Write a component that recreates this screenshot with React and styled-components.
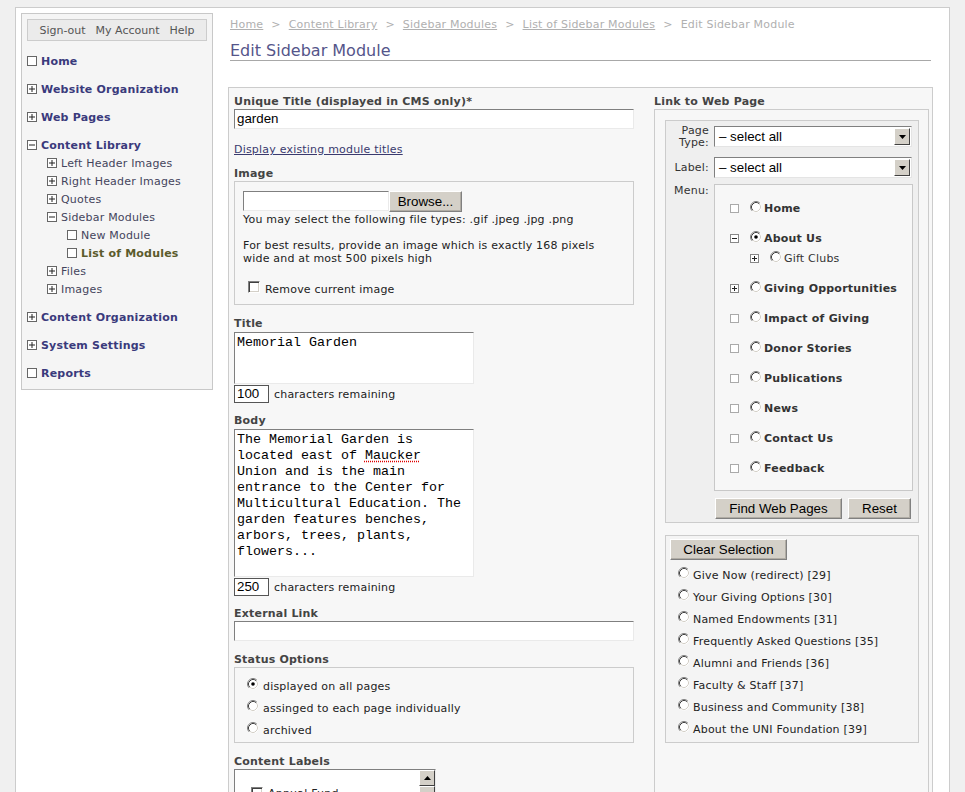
import styled, { createGlobalStyle } from "styled-components";

const GlobalStyle = createGlobalStyle`
  body {
    margin: 0;
    background: #f0f0f0;
    font-family: "DejaVu Sans", Verdana, sans-serif;
    font-size: 11px;
    letter-spacing: 0.2px;
    color: #333;
  }
  * { box-sizing: border-box; }
`;

const navItems = [
  { label: "Home", level: 0 },
  { label: "Website Organization", level: 0, sign: "+" },
  { label: "Web Pages", level: 0, sign: "+" },
  { label: "Content Library", level: 0, sign: "-" },
  { label: "Left Header Images", level: 1, sign: "+" },
  { label: "Right Header Images", level: 1, sign: "+" },
  { label: "Quotes", level: 1, sign: "+" },
  { label: "Sidebar Modules", level: 1, sign: "-" },
  { label: "New Module", level: 2 },
  { label: "List of Modules", level: 2, active: true },
  { label: "Files", level: 1, sign: "+" },
  { label: "Images", level: 1, sign: "+" },
  { label: "Content Organization", level: 0, sign: "+" },
  { label: "System Settings", level: 0, sign: "+" },
  { label: "Reports", level: 0 },
];

const menuItems = [
  { label: "Home" },
  { label: "About Us", sign: "-", checked: true },
  { label: "Gift Clubs", sign: "+", child: true },
  { label: "Giving Opportunities", sign: "+" },
  { label: "Impact of Giving" },
  { label: "Donor Stories" },
  { label: "Publications" },
  { label: "News" },
  { label: "Contact Us" },
  { label: "Feedback" },
];

const results = [
  "Give Now (redirect) [29]",
  "Your Giving Options [30]",
  "Named Endowments [31]",
  "Frequently Asked Questions [35]",
  "Alumni and Friends [36]",
  "Faculty & Staff [37]",
  "Business and Community [38]",
  "About the UNI Foundation [39]",
];

const bodyLines = [
  "The Memorial Garden is",
  ["located east of ", "Maucker"],
  "Union and is the main",
  "entrance to the Center for",
  "Multicultural Education. The",
  "garden features benches,",
  "arbors, trees, plants,",
  "flowers...",
];

const TreeBox = ({ sign, size = 10, light }) => {
  const m = size / 2;
  return (
    <svg width={size} height={size} viewBox={`0 0 ${size} ${size}`}>
      <rect
        x="0.5"
        y="0.5"
        width={size - 1}
        height={size - 1}
        fill="#fff"
        stroke={light ? (sign ? "#888" : "#aaa") : "#666"}
      />
      {sign && <path d={`M2 ${m}h${size - 4}`} stroke="#222" />}
      {sign === "+" && <path d={`M${m} 2v${size - 4}`} stroke="#222" />}
    </svg>
  );
};

const Radio = ({ checked }) => (
  <svg width="12" height="12" viewBox="0 0 12 12">
    <circle cx="6" cy="6" r="5.5" fill="#fff" />
    <path d="M2.11 9.89A5.5 5.5 0 0 1 9.89 2.11" fill="none" stroke="#808080" />
    <path d="M2.82 9.18A4.5 4.5 0 0 1 9.18 2.82" fill="none" stroke="#404040" />
    <path d="M9.18 2.82A4.5 4.5 0 0 1 2.82 9.18" fill="none" stroke="#d4d0c8" />
    {checked && <circle cx="6" cy="6" r="1.8" fill="#000" />}
  </svg>
);

const Arrow = ({ up }) => (
  <svg width="7" height="4" viewBox="0 0 7 4">
    <path d={up ? "M3.5 0L7 4H0z" : "M0 0h7L3.5 4z"} fill="#000" />
  </svg>
);

const Page = styled.div`
  margin: 7px 15px 0;
  padding: 5px;
  background: #fff;
  border: 1px solid #ccc;
  border-bottom: none;
  display: flex;
  align-items: flex-start;
`;

const Sidebar = styled.nav`
  width: 192px;
  flex-shrink: 0;
  background: #f5f5f5;
  border: 1px solid #c8c8c8;
  padding: 5px 5px 7px;
`;

const AccountBar = styled.div`
  height: 22px;
  background: #ebebeb;
  border: 1px solid #ccc;
  display: flex;
  align-items: center;
  justify-content: center;
  gap: 10px;
  color: #555;
  letter-spacing: 0;
`;

const NavTree = styled.div`
  padding-top: 1px;
`;

const NavItem = styled.div`
  display: flex;
  align-items: center;
  gap: 4px;
  height: 18px;
  margin-top: ${(p) => (p.$level === 0 ? 10 : 0)}px;
  padding-left: ${(p) => p.$level * 20}px;
  font-weight: ${(p) => (p.$level === 0 || p.$active ? "bold" : "normal")};
  color: ${(p) =>
    p.$active ? "#5b5b2c" : p.$level === 0 ? "#3a3a7c" : "#44445c"};
`;

const Main = styled.main`
  flex: 1;
  padding: 0 11px 0 15px;
`;

const Breadcrumb = styled.div`
  margin: 4px 2px 0;
  line-height: 16px;
  height: 14px;
  color: #b0b0b0;

  a {
    color: inherit;
    text-decoration: underline;
  }
`;

const Sep = styled.span`
  margin: 0 8px;
`;

const Heading = styled.h1`
  margin: 9px 2px 0;
  font-size: 16px;
  font-weight: normal;
  letter-spacing: 0;
  line-height: 22px;
  height: 21px;
  color: #55558a;
  border-bottom: 1px solid #a8a8a8;
`;

const ContentBox = styled.div`
  margin-top: 26px;
  background: #f7f7f7;
  border: 1px solid #ccc;
  border-bottom: none;
  padding: 6px 3px 0 5px;
  display: flex;
  gap: 20px;
`;

const LeftCol = styled.div`
  width: 400px;
  flex-shrink: 0;
  padding-bottom: 20px;
`;

const RightCol = styled.div`
  width: 275px;
  display: flex;
  flex-direction: column;
`;

const FieldLabel = styled.div`
  margin-top: ${(p) => p.$mt || 0}px;
  font-weight: bold;
  height: 14px;
  line-height: 16px;
  color: #444;
`;

const TextInput = styled.div`
  margin-top: 1px;
  width: ${(p) => p.$w || 400}px;
  height: 20px;
  background: #fff;
  border: 1px solid;
  border-color: #7f7f7f #eaeaea #eaeaea #7f7f7f;
  padding: 0 2px;
  font-family: "Liberation Sans", Arial, sans-serif;
  font-size: 13.33px;
  letter-spacing: 0;
  line-height: 18px;
  color: #000;
`;

const TextLink = styled.a`
  display: block;
  margin-top: 13px;
  height: 14px;
  line-height: 16px;
  color: #3a3a6e;
  text-decoration: underline;
`;

const FieldBox = styled.div`
  margin-top: 1px;
  border: 1px solid #ccc;
  padding: ${(p) => p.$pad};
`;

const FileRow = styled.div`
  display: flex;
  height: 20px;
`;

const FileBox = styled.div`
  width: 146px;
  height: 20px;
  background: #fff;
  border: 1px solid;
  border-color: #7f7f7f #eaeaea #eaeaea #7f7f7f;
`;

const Button = styled.button`
  width: ${(p) => p.$w}px;
  height: 21px;
  padding: 0;
  margin: 0;
  background: #d4d0c8;
  border: 1px solid;
  border-color: #fff #808080 #808080 #fff;
  box-shadow: inset -1px -1px 0 #b0aca4;
  font-family: "Liberation Sans", Arial, sans-serif;
  font-size: 13.33px;
  letter-spacing: 0;
  color: #000;
`;

const HelpText = styled.p`
  margin: ${(p) => p.$mt}px 0 0;
  line-height: 13px;
  color: #222;
`;

const CheckRow = styled.div`
  display: flex;
  align-items: center;
  gap: 5px;
  height: 14px;
  margin-top: ${(p) => p.$mt || 0}px;
  padding-left: ${(p) => p.$pl || 0}px;
  color: #222;
`;

const CheckBox = styled.span`
  display: inline-block;
  width: 12px;
  height: 12px;
  margin-bottom: ${(p) => p.$lift || 0}px;
  background: #fff;
  border: 1px solid;
  border-color: #808080 #fff #fff #808080;
  box-shadow: inset 1px 1px 0 #404040, inset -1px -1px 0 #d4d0c8;
`;

const TextArea = styled.div`
  margin-top: 2px;
  width: 240px;
  height: ${(p) => p.$h}px;
  background: #fff;
  border: 1px solid;
  border-color: #7f7f7f #eaeaea #eaeaea #7f7f7f;
  padding: 2px 2px 0;
  font-family: "Liberation Mono", "Courier New", monospace;
  font-size: 13.33px;
  letter-spacing: 0;
  line-height: 16px;
  color: #000;
  white-space: pre;
`;

const Misspelled = styled.span`
  text-decoration: underline dotted #d00;
  text-underline-offset: 2px;
`;

const CountRow = styled.div`
  margin-top: 1px;
  display: flex;
  align-items: center;
  gap: 5px;
  height: 18px;
  line-height: 21px;
  color: #222;
`;

const CountBox = styled.div`
  width: 35px;
  height: 18px;
  background: #fff;
  border: 1px solid #555;
  padding: 0 2px;
  font-family: "Liberation Sans", Arial, sans-serif;
  font-size: 13.33px;
  letter-spacing: 0;
  line-height: 16px;
  color: #000;
`;

const RadioRow = styled.div`
  display: flex;
  align-items: center;
  gap: ${(p) => p.$gap || 4}px;
  height: 22px;
  padding-left: ${(p) => p.$pl || 0}px;
  color: #222;

  svg {
    margin-bottom: ${(p) => p.$lift || 0}px;
    flex-shrink: 0;
  }
`;

const ListBox = styled.div`
  margin-top: 1px;
  width: 202px;
  height: 110px;
  display: flex;
  background: #fff;
  border: 1px solid;
  border-color: #7f7f7f #eaeaea #eaeaea #7f7f7f;
`;

const ListInner = styled.div`
  flex: 1;
  padding: 16px 0 0 16px;
`;

const ScrollTrack = styled.div`
  width: 16px;
  background: #ecebe6;
  display: flex;
  flex-direction: column;
`;

const ScrollButton = styled.div`
  height: ${(p) => p.$h || 16}px;
  background: #d4d0c8;
  border: 1px solid;
  border-color: #fff #404040 #404040 #fff;
  display: flex;
  align-items: center;
  justify-content: center;
`;

const LinkBox = styled.div`
  flex: 1;
  margin-top: 1px;
  border: 1px solid #ccc;
  border-bottom: none;
  padding: 10px 9px 0 10px;
`;

const FilterPanel = styled.div`
  border: 1px solid #ccc;
  background: #efefef;
  padding: 5px 5px 3px 0;
`;

const FilterRow = styled.div`
  display: flex;
  align-items: ${(p) => (p.$top ? "flex-start" : "center")};
  height: ${(p) => (p.$top ? "auto" : "21px")};
  margin-top: ${(p) => p.$mt || 0}px;
`;

const FilterLabel = styled.div`
  width: 43px;
  flex-shrink: 0;
  margin-right: 5px;
  padding-top: ${(p) => p.$pt || 0}px;
  text-align: right;
  line-height: 12px;
  color: #333;
`;

const Select = styled.div`
  width: 198px;
  height: 21px;
  display: flex;
  align-items: center;
  justify-content: space-between;
  background: #fff;
  border: 1px solid;
  border-color: #808080 #e4e4e4 #e4e4e4 #808080;
  padding: 0 1px 0 4px;
  font-family: "Liberation Sans", Arial, sans-serif;
  font-size: 13.33px;
  letter-spacing: 0;
  color: #000;
`;

const SelectArrow = styled.span`
  width: 16px;
  height: 17px;
  background: #d4d0c8;
  border: 1px solid;
  border-color: #fff #404040 #404040 #fff;
  display: flex;
  align-items: center;
  justify-content: center;
`;

const MenuBox = styled.div`
  width: 199px;
  height: 307px;
  background: #f7f7f7;
  border: 1px solid #c8c8c8;
  padding: 3px 0 0 15px;
`;

const MenuItem = styled.div`
  display: flex;
  align-items: center;
  height: 20px;
  margin-top: ${(p) => (p.$child ? 0 : 10)}px;
  padding-left: ${(p) => (p.$child ? 20 : 0)}px;
  font-weight: ${(p) => (p.$child ? "normal" : "bold")};
  color: #333;

  svg:nth-child(2) {
    margin: 0 2px 2px 11px;
  }
`;

const ButtonRow = styled.div`
  display: flex;
  gap: 6px;
  margin: 7px 0 0 49px;
`;

const ResultsPanel = styled.div`
  margin-top: 12px;
  border: 1px solid #ccc;
  background: #f4f4f4;
  padding: 3px 0 2px 4px;
`;

const ResultsList = styled.div`
  margin-top: 4px;
`;

export default function App() {
  return (
    <>
      <GlobalStyle />
      <Page>
        <Sidebar>
          <AccountBar>
            <span>Sign-out</span>
            <span>My Account</span>
            <span>Help</span>
          </AccountBar>
          <NavTree>
            {navItems.map((item) => (
              <NavItem
                key={item.label}
                $level={item.level}
                $active={item.active}
              >
                <TreeBox sign={item.sign} />
                {item.label}
              </NavItem>
            ))}
          </NavTree>
        </Sidebar>

        <Main>
          <Breadcrumb>
            <a>Home</a>
            <Sep>&gt;</Sep>
            <a>Content Library</a>
            <Sep>&gt;</Sep>
            <a>Sidebar Modules</a>
            <Sep>&gt;</Sep>
            <a>List of Sidebar Modules</a>
            <Sep>&gt;</Sep>
            Edit Sidebar Module
          </Breadcrumb>
          <Heading>Edit Sidebar Module</Heading>

          <ContentBox>
            <LeftCol>
              <FieldLabel>Unique Title (displayed in CMS only)*</FieldLabel>
              <TextInput>garden</TextInput>
              <TextLink>Display existing module titles</TextLink>

              <FieldLabel $mt={10}>Image</FieldLabel>
              <FieldBox $pad="9px 8px 8px">
                <FileRow>
                  <FileBox />
                  <Button $w={73}>Browse...</Button>
                </FileRow>
                <HelpText $mt={2}>
                  You may select the following file types: .gif .jpeg .jpg .png
                </HelpText>
                <HelpText $mt={13}>
                  For best results, provide an image which is exactly 168 pixels
                  <br />
                  wide and at most 500 pixels high
                </HelpText>
                <CheckRow $mt={17} $pl={5}>
                  <CheckBox $lift={4} />
                  Remove current image
                </CheckRow>
              </FieldBox>

              <FieldLabel $mt={11}>Title</FieldLabel>
              <TextArea $h={52}>Memorial Garden</TextArea>
              <CountRow>
                <CountBox>100</CountBox>
                characters remaining
              </CountRow>

              <FieldLabel $mt={10}>Body</FieldLabel>
              <TextArea $h={148}>
                {bodyLines.map((line, i) => (
                  <div key={i}>
                    {Array.isArray(line) ? (
                      <>
                        {line[0]}
                        <Misspelled>{line[1]}</Misspelled>
                      </>
                    ) : (
                      line
                    )}
                  </div>
                ))}
              </TextArea>
              <CountRow>
                <CountBox>250</CountBox>
                characters remaining
              </CountRow>

              <FieldLabel $mt={10}>External Link</FieldLabel>
              <TextInput />

              <FieldLabel $mt={11}>Status Options</FieldLabel>
              <FieldBox $pad="7px 12px 1px">
                <RadioRow $lift={4}>
                  <Radio checked />
                  displayed on all pages
                </RadioRow>
                <RadioRow $lift={4}>
                  <Radio />
                  assinged to each page individually
                </RadioRow>
                <RadioRow $lift={4}>
                  <Radio />
                  archived
                </RadioRow>
              </FieldBox>

              <FieldLabel $mt={11}>Content Labels</FieldLabel>
              <ListBox>
                <ListInner>
                  <CheckRow>
                    <CheckBox />
                    Annual Fund
                  </CheckRow>
                </ListInner>
                <ScrollTrack>
                  <ScrollButton>
                    <Arrow up />
                  </ScrollButton>
                  <ScrollButton $h={30} />
                </ScrollTrack>
              </ListBox>
            </LeftCol>

            <RightCol>
              <FieldLabel>Link to Web Page</FieldLabel>
              <LinkBox>
                <FilterPanel>
                  <FilterRow>
                    <FilterLabel>
                      Page
                      <br />
                      Type:
                    </FilterLabel>
                    <Select>
                      – select all
                      <SelectArrow>
                        <Arrow />
                      </SelectArrow>
                    </Select>
                  </FilterRow>
                  <FilterRow $mt={10}>
                    <FilterLabel>Label:</FilterLabel>
                    <Select>
                      – select all
                      <SelectArrow>
                        <Arrow />
                      </SelectArrow>
                    </Select>
                  </FilterRow>
                  <FilterRow $mt={6} $top>
                    <FilterLabel $pt={1}>Menu:</FilterLabel>
                    <MenuBox>
                      {menuItems.map((item) => (
                        <MenuItem key={item.label} $child={item.child}>
                          <TreeBox sign={item.sign} size={9} light />
                          <Radio checked={item.checked} />
                          {item.label}
                        </MenuItem>
                      ))}
                    </MenuBox>
                  </FilterRow>
                  <ButtonRow>
                    <Button $w={127}>Find Web Pages</Button>
                    <Button $w={63}>Reset</Button>
                  </ButtonRow>
                </FilterPanel>

                <ResultsPanel>
                  <Button $w={117}>Clear Selection</Button>
                  <ResultsList>
                    {results.map((r) => (
                      <RadioRow key={r} $pl={8} $gap={3} $lift={4}>
                        <Radio />
                        {r}
                      </RadioRow>
                    ))}
                  </ResultsList>
                </ResultsPanel>
              </LinkBox>
            </RightCol>
          </ContentBox>
        </Main>
      </Page>
    </>
  );
}
